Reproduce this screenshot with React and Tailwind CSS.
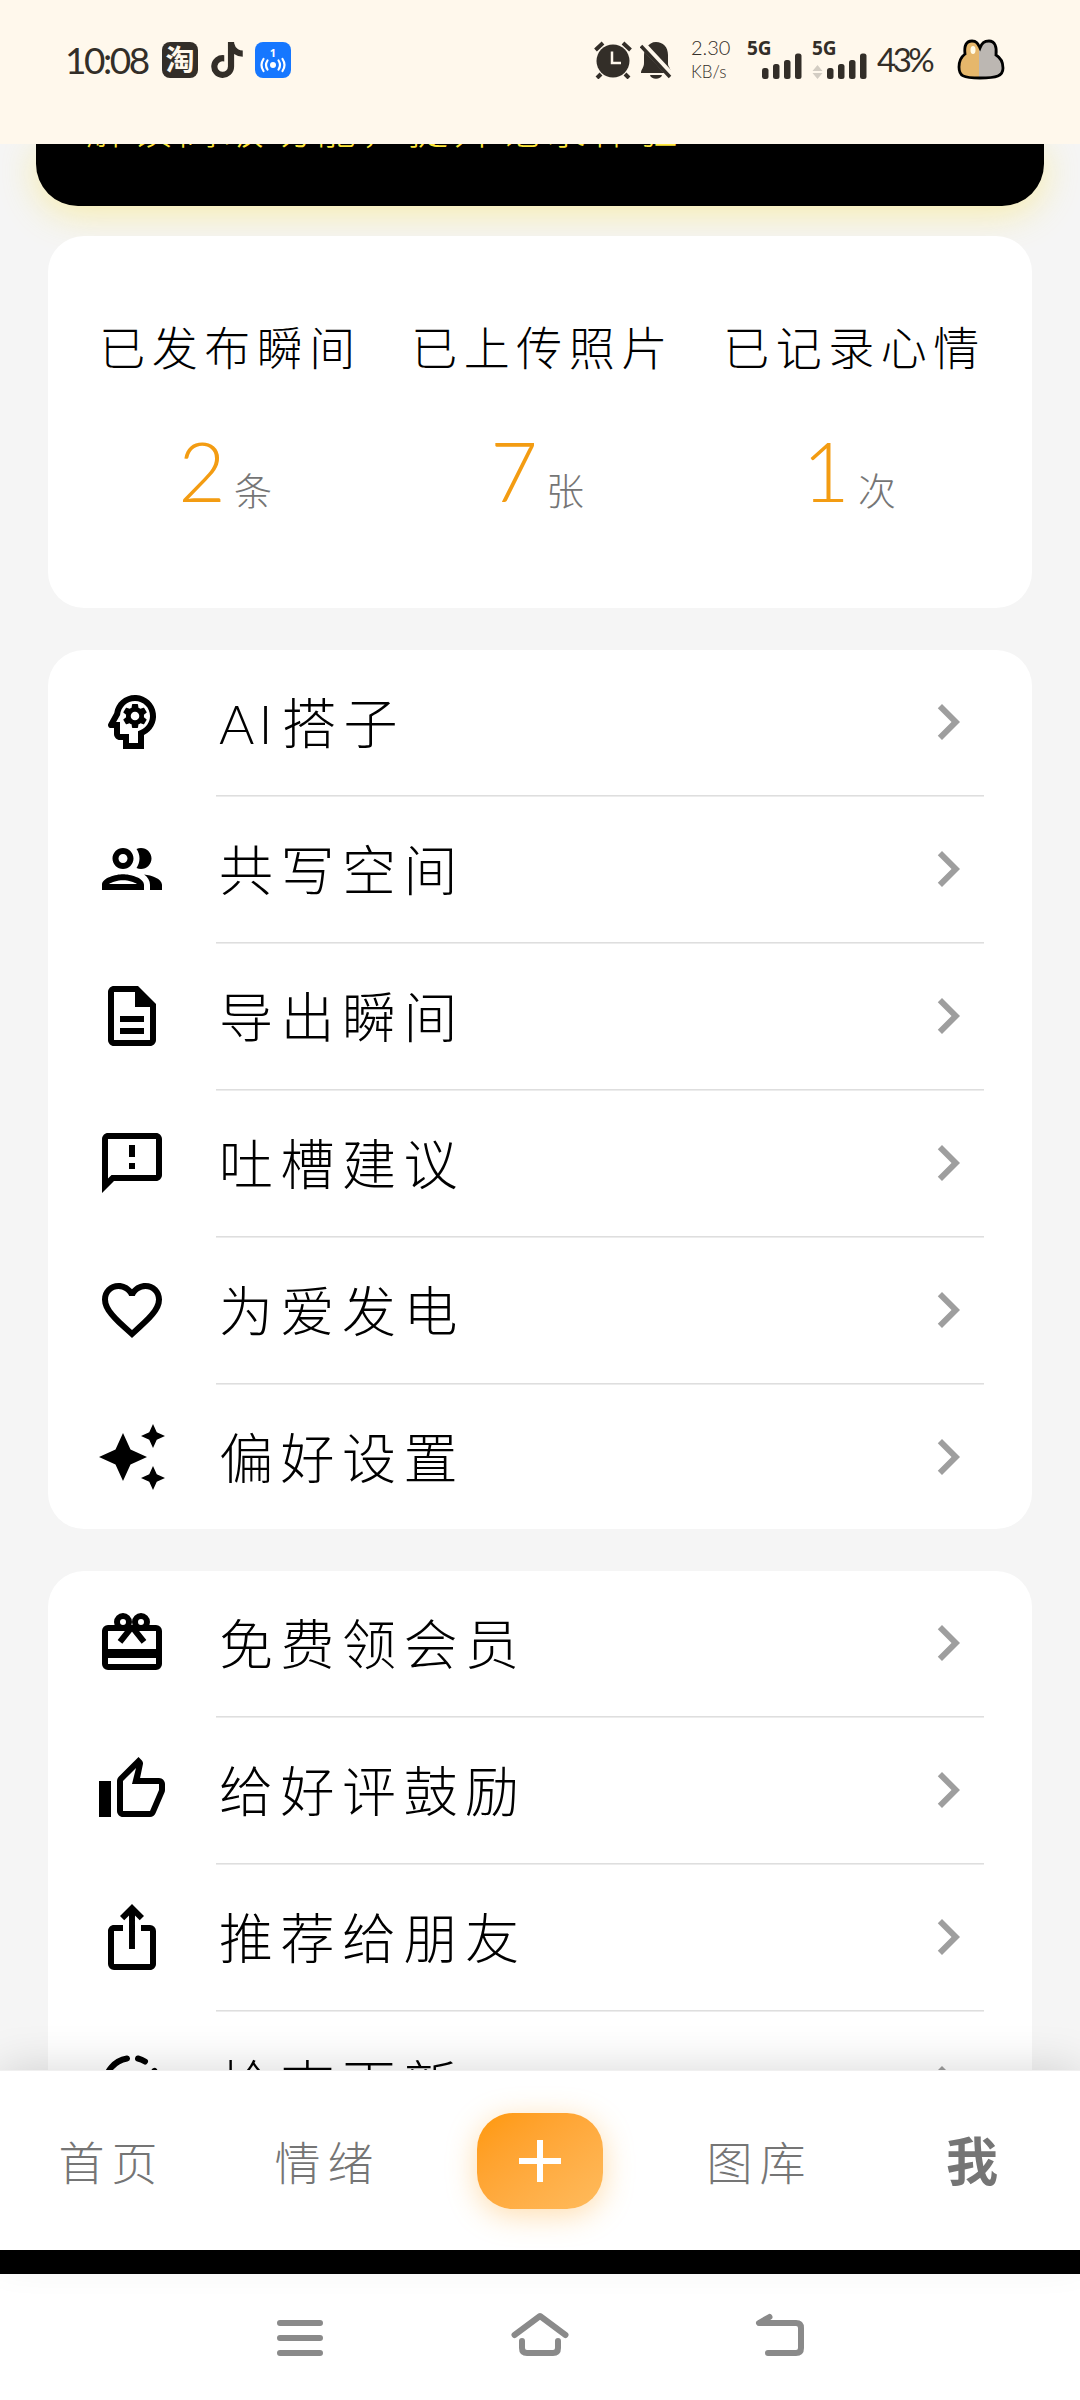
import {
  MdOutlinePsychology,
  MdOutlineGroup,
  MdOutlineDescription,
  MdOutlineFeedback,
  MdFavoriteBorder,
  MdAutoAwesome,
  MdOutlineIosShare,
  MdChevronRight,
  MdAdd,
} from 'react-icons/md';
import { FaTiktok } from 'react-icons/fa6';

function Gift() {
  return (
    <svg viewBox="0 0 24 24" width="72" height="72" fill="none" stroke="currentColor" strokeWidth="2">
      <rect x="3" y="7" width="18" height="13" rx="1" />
      <path d="M2 15.5h20" strokeWidth="3" />
      <circle cx="9" cy="5" r="2" />
      <circle cx="15" cy="5" r="2" />
      <path d="M12 6.6L8 11.6M12 6.6l4 5" />
    </svg>
  );
}

function Thumb() {
  return (
    <svg viewBox="0 0 24 24" width="72" height="72">
      <path d="M1 9h4v12H1z" fill="currentColor" />
      <path
        d="M9 21h9c.83 0 1.54-.5 1.84-1.22l3.02-7.05c.09-.23.14-.47.14-.73v-2c0-1.1-.9-2-2-2h-6.31l.95-4.57.03-.32c0-.41-.17-.79-.44-1.06L14.170 1 7.580 7.590C7.220 7.950 7 8.450 7 9v10c0 1.100.9 2 2 2zM9 9l4.340-4.340L12 10h9v2l-3 7H9V9z"
        fill="currentColor"
      />
    </svg>
  );
}

function Update() {
  return (
    <svg viewBox="0 0 72 72" width="72" height="72" fill="none" stroke="currentColor" strokeWidth="6" strokeLinecap="round">
      <path d="M31 10.500A26 26 0 1 0 60 44" />
      <path d="M42 10.500A26 26 0 0 1 49 13.500" />
      <path d="M58.500 23A26 26 0 0 1 61 30" />
      <path d="M36 25v13l8 5" strokeWidth="5" />
    </svg>
  );
}

const mainMenu = [
  { label: 'AI搭子', Icon: MdOutlinePsychology },
  { label: '共写空间', Icon: MdOutlineGroup },
  { label: '导出瞬间', Icon: MdOutlineDescription },
  { label: '吐槽建议', Icon: MdOutlineFeedback },
  { label: '为爱发电', Icon: MdFavoriteBorder },
  { label: '偏好设置', Icon: MdAutoAwesome },
];

const moreMenu = [
  { label: '免费领会员', Icon: Gift },
  { label: '给好评鼓励', Icon: Thumb },
  { label: '推荐给朋友', Icon: MdOutlineIosShare },
  { label: '检查更新', Icon: Update },
];

const stats = [
  { label: '已发布瞬间', value: '2', unit: '条' },
  { label: '已上传照片', value: '7', unit: '张' },
  { label: '已记录心情', value: '1', unit: '次' },
];

function Menu({ items }) {
  return (
    <section className="shrink-0 rounded-[36px] bg-white">
      {items.map(({ label, Icon }, i) => (
        <div key={label}>
          {i > 0 && (
            <div className="ml-[168px] mr-12 h-[3px] pt-px">
              <div className="h-[2px] border-b border-[#ececec] bg-[#dedede]" />
            </div>
          )}
          <div className="flex h-36 items-center px-12">
            <Icon size={72} className="shrink-0 text-black" />
            <span className="ml-[51px] flex-1 whitespace-nowrap pt-[3px] text-[54px] leading-none tracking-[7.500px] text-black">
              {label.startsWith('AI') ? (
                <>
                  <span className="inline-block w-[63px] tracking-[4px]">AI</span>
                  {label.slice(2)}
                </>
              ) : (
                label
              )}
            </span>
            <MdChevronRight size={72} className="shrink-0 text-[#9e9e9e]" />
          </div>
        </div>
      ))}
    </section>
  );
}

function Signal({ arrows }) {
  return (
    <div className="relative h-10 w-14 shrink-0">
      <span className="absolute -top-[1px] left-0 font-['Noto_Sans'] text-[19px] font-bold leading-[18px]">5G</span>
      <svg width="56" height="40" viewBox="0 0 56 40" fill="#332e28">
        {arrows && <path d="M0.500 31l5-6 5 6zM0.500 33l5 6 5-6z" fill="#d3cdc3" />}
        <rect x="15" y="28" width="6.500" height="11" rx="2.500" />
        <rect x="26" y="24" width="6.500" height="15" rx="2.500" />
        <rect x="37" y="20" width="6.500" height="19" rx="2.500" />
        <rect x="48" y="13.500" width="6.500" height="25.500" rx="2.500" />
      </svg>
    </div>
  );
}

function StatusBar() {
  return (
    <header className="z-10 flex h-36 shrink-0 items-start bg-[#fff8ec] pl-[65px] pt-[38px] text-[#332e28]">
      <div className="flex h-[43px] w-full items-center">
        <span className="w-[97px] shrink-0 whitespace-nowrap text-[37px] font-normal leading-none tracking-[-2.500px]">10:08</span>
        <span className="flex size-9 shrink-0 items-center justify-center rounded-lg bg-[#332e28] text-[29px] font-bold leading-none text-[#fff8ec]">
          淘
        </span>
        <FaTiktok size={36} className="ml-[11px] shrink-0" />
        <svg width="36" height="36" viewBox="0 0 36 36" fill="none" stroke="white" strokeWidth="2.200" strokeLinecap="round" className="ml-[10px] shrink-0">
          <rect width="36" height="36" rx="8" fill="#1677ff" stroke="none" />
          <text x="18" y="14.500" textAnchor="middle" fontSize="11" fontWeight="700" fontFamily="Noto Sans" fill="white" stroke="none">1</text>
          <circle cx="18" cy="23" r="3" fill="white" stroke="none" />
          <path d="M12.500 18.500q-3 4.500 0 9M8.500 17q-4 6 0 12M23.500 18.500q3 4.500 0 9M27.500 17q4 6 0 12" />
        </svg>
        <svg width="38" height="38" viewBox="0 0 38 38" fill="none" stroke="#332e28" strokeWidth="4" className="ml-[303px] shrink-0">
          <circle cx="19" cy="20" r="16.500" fill="#332e28" stroke="none" />
          <path d="M1.500 9L9 2M36.500 9L29 2M7 33l-4 4M31 33l4 4" />
          <path d="M18 10.500v11.500h9" stroke="#fff8ec" strokeWidth="2.500" />
        </svg>
        <svg width="32" height="38" viewBox="0 0 32 38" fill="#332e28" className="ml-[8px] shrink-0">
          <path d="M7 6C9 3 12 1 16 1c7 0 12 5 12 13v9c0 3 3 4 3 9H1c0-4 3-5 3-10V14c0-3 1-6 3-8zM10 34h12c-1 5-11 5-12 0z" />
          <path d="M2 3l29 31" stroke="#fff8ec" strokeWidth="7" />
          <path d="M1 5l29 31" stroke="#332e28" strokeWidth="3.500" />
        </svg>
        <span className="ml-[19px] flex w-[56px] shrink-0 flex-col gap-[5px] text-[20px] font-light leading-[20px]">
          <span>2.30</span>
          <span className="text-[17px]">KB/s</span>
        </span>
        <Signal />
        <span className="w-[9px] shrink-0" />
        <Signal arrows />
        <span className="ml-[9px] w-[80px] shrink-0 whitespace-nowrap text-[33px] font-normal leading-none tracking-[-3.500px]">43%</span>
        <svg width="48" height="42" viewBox="0 0 48 42" className="shrink-0">
          <path d="M8 15C7 7 9 2 15 2c5 0 6 3 8 7 2-5 4-7 9-7 6 0 8 6 7 14 5 3 7 7 7 13 0 8-6 10-23 10S2 37 2 28c0-6 2-10 6-13z" fill="#bcb7b2" />
          <path d="M8 15C7 7 9 2 15 2c4 0 6 3 7 7v30C8 39 2 36 2 28c0-6 2-10 6-13z" fill="#e6b76b" />
          <path d="M8 15C7 7 9 2 15 2c5 0 6 3 8 7 2-5 4-7 9-7 6 0 8 6 7 14 5 3 7 7 7 13 0 8-6 10-23 10S2 37 2 28c0-6 2-10 6-13z" fill="none" stroke="black" strokeWidth="2.800" />
          <ellipse cx="16" cy="11" rx="2.500" ry="4" fill="#fffbe8" />
        </svg>
      </div>
    </header>
  );
}

export default function App() {
  return (
    <div className="flex h-[2400px] w-[1080px] flex-col overflow-hidden bg-[#f5f5f5] font-[Lato,'Noto_Sans_CJK_SC',sans-serif] font-light">
      <StatusBar />
      <main className="flex min-h-0 flex-1 flex-col overflow-hidden px-12">
        <section className="-mx-3 flex h-[62px] shrink-0 items-start rounded-b-[42px] bg-black pl-[50px] shadow-[0_8px_36px_rgba(250,225,70,0.42)]">
          <p className="-mt-[35px] whitespace-nowrap text-[40px] leading-[40px] tracking-[6px] text-[#ffe83b]">
            解锁高级功能，提升记录体验
          </p>
        </section>
        <section className="mt-[30px] flex h-[372px] shrink-0 justify-between rounded-[36px] bg-white px-6">
          {stats.map((s) => (
            <div key={s.label} className="flex w-[312px] shrink-0 flex-col items-center pt-[87px]">
              <span className="whitespace-nowrap pl-[5px] text-[46px] leading-[50px] tracking-[6.500px] text-black">{s.label}</span>
              <div className="-ml-[6px] mt-[56px] flex">
                <span className="w-[56px] text-center text-[82px] leading-[82px] text-[#f39c12]">{s.value}</span>
                <span className="w-[46px] pl-[4px] pt-[37px] text-[38px] leading-[48px] text-[#757575]">{s.unit}</span>
              </div>
            </div>
          ))}
        </section>
        <div className="h-[42px] shrink-0" />
        <Menu items={mainMenu} />
        <div className="h-[42px] shrink-0" />
        <Menu items={moreMenu} />
      </main>
      <nav className="z-10 grid h-[180px] shrink-0 grid-cols-5 items-center justify-items-center border-t border-[#f0f0f0] bg-white text-[46px] leading-none text-[#757575] shadow-[0_0_44px_rgba(0,0,0,0.16)]">
        <span className="pl-[7px] pt-[4px] tracking-[7px]">首页</span>
        <span className="pl-[7px] pt-[4px] tracking-[7px]">情绪</span>
        <span className="flex h-[96px] w-[126px] items-center justify-center rounded-[36px] bg-linear-to-br from-[#ff9800] to-[#ffbb5c] text-white shadow-[0_6px_30px_rgba(255,170,50,0.4)]">
          <MdAdd size={72} />
        </span>
        <span className="pl-[7px] pt-[4px] tracking-[7px]">图库</span>
        <span className="text-[52px] font-bold">我</span>
      </nav>
      <div className="z-10 h-[24px] shrink-0 bg-black" />
      <footer className="flex h-[126px] shrink-0 items-center justify-center bg-white">
        <svg width="560" height="60" viewBox="260 2306 560 60" fill="none" stroke="#8a8a8a" strokeWidth="6" strokeLinecap="round" strokeLinejoin="round" className="mb-[1px]">
          <path d="M280 2322h40M280 2337h40M280 2352h40" />
          <path d="M514.500 2334L540 2315l25.500 19M522 2340v7q0 5 5 5h26q5 0 5-5v-7" />
          <path d="M769.500 2316l-10.500 6h37q5 0 5 5v20q0 5-5 5h-28" />
        </svg>
      </footer>
    </div>
  );
}
